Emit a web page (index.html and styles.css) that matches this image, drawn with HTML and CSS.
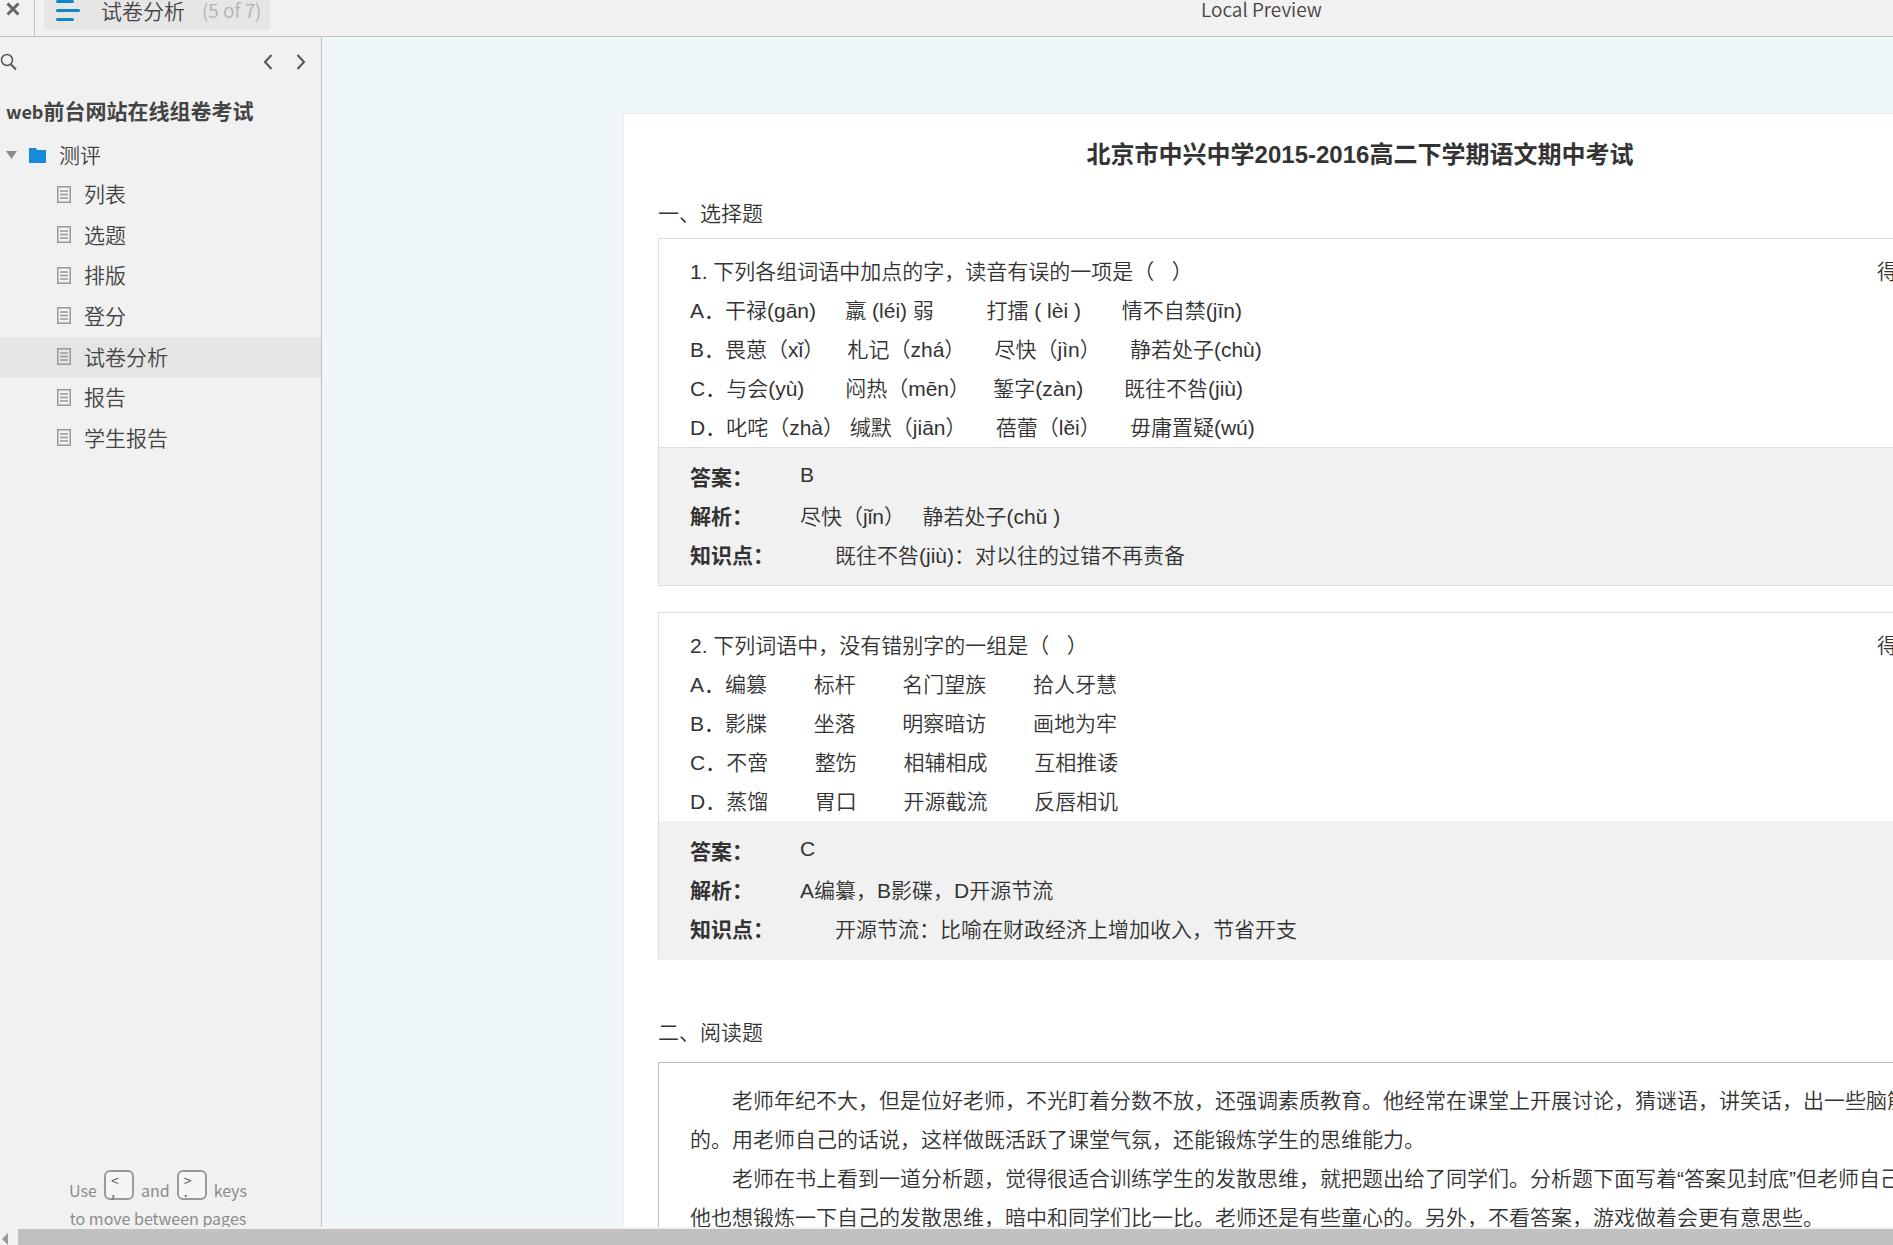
FILE: index.html
```html
<!DOCTYPE html>
<html lang="zh-CN">
<head>
<meta charset="utf-8">
<title>试卷分析</title>
<link rel="stylesheet" href="styles.css">
</head>
<body>
<header class="topbar">
  <button class="close" type="button" aria-label="Close">
    <svg width="14" height="14" viewBox="0 0 14 14"><path d="M1.500 1.500L12.500 12.500M12.500 1.500L1.500 12.500" stroke="#666" stroke-width="3" fill="none"/></svg>
  </button>
  <button class="page-tab" type="button">
    <svg width="24" height="22" viewBox="0 0 24 22"><path d="M1.500 1.500H16.500M1.500 10.500H22.500M1.500 19.500H16.500" stroke="#0f87c0" stroke-width="3" stroke-linecap="round" fill="none"/></svg>
    <span class="tab-name">试卷分析</span>
    <span class="tab-count">(5 of 7)</span>
  </button>
  <span class="project">Local Preview</span>
</header>

<div class="workspace">
  <aside class="sidebar">
    <div class="tools">
      <button class="tool" type="button" aria-label="Search">
        <svg width="17" height="18" viewBox="0 0 17 18"><circle cx="7" cy="7" r="5.500" stroke="#555" stroke-width="1.500" fill="none"/><path d="M11 11.500L16 16.500" stroke="#555" stroke-width="2"/></svg>
      </button>
      <button class="tool prev" type="button" aria-label="Previous">
        <svg width="10" height="16" viewBox="0 0 10 16"><path d="M8.500 1L2 8L8.500 15" stroke="#555" stroke-width="2" fill="none"/></svg>
      </button>
      <button class="tool" type="button" aria-label="Next">
        <svg width="10" height="16" viewBox="0 0 10 16"><path d="M1.500 1L8 8L1.500 15" stroke="#555" stroke-width="2" fill="none"/></svg>
      </button>
    </div>
    <h2 class="project-name"><span class="latin">web</span>前台网站在线组卷考试</h2>
    <div class="folder">
      <svg width="11" height="8" viewBox="0 0 11 8"><path d="M0 0H11L5.500 8Z" fill="#8c8c8c"/></svg>
      <svg width="18" height="16" viewBox="0 0 18 16"><path d="M0 1H7L8 3H17V16H0Z" fill="#168bdc"/></svg>
      <span>测评</span>
    </div>
    <ul class="pages">
      <li><a href="#"><svg class="doc" viewBox="0 0 14 17"><path d="M.750.750H13.250V16.250H.750ZM3 5H11M3 8.500H11M3 12H11" /></svg><span>列表</span></a></li>
      <li><a href="#"><svg class="doc" viewBox="0 0 14 17"><path d="M.750.750H13.250V16.250H.750ZM3 5H11M3 8.500H11M3 12H11" /></svg><span>选题</span></a></li>
      <li><a href="#"><svg class="doc" viewBox="0 0 14 17"><path d="M.750.750H13.250V16.250H.750ZM3 5H11M3 8.500H11M3 12H11" /></svg><span>排版</span></a></li>
      <li><a href="#"><svg class="doc" viewBox="0 0 14 17"><path d="M.750.750H13.250V16.250H.750ZM3 5H11M3 8.500H11M3 12H11" /></svg><span>登分</span></a></li>
      <li class="active"><a href="#"><svg class="doc" viewBox="0 0 14 17"><path d="M.750.750H13.250V16.250H.750ZM3 5H11M3 8.500H11M3 12H11" /></svg><span>试卷分析</span></a></li>
      <li><a href="#"><svg class="doc" viewBox="0 0 14 17"><path d="M.750.750H13.250V16.250H.750ZM3 5H11M3 8.500H11M3 12H11" /></svg><span>报告</span></a></li>
      <li><a href="#"><svg class="doc" viewBox="0 0 14 17"><path d="M.750.750H13.250V16.250H.750ZM3 5H11M3 8.500H11M3 12H11" /></svg><span>学生报告</span></a></li>
    </ul>
    <div class="hint">
      <p class="hint-line">Use <kbd><span>&lt;</span><span>,</span></kbd> and <kbd><span>&gt;</span><span>.</span></kbd> keys</p>
      <p>to move between pages</p>
    </div>
  </aside>

  <main class="canvas">
    <article class="paper">
      <h1>北京市中兴中学2015-2016高二下学期语文期中考试</h1>

      <h2 class="section">一、选择题</h2>
      <section class="question">
        <div class="stem">
          <div class="text">1. 下列各组词语中加点的字，读音有误的一项是（   ）
A．干禄(gān)     羸 (léi) 弱         打擂 ( lèi )       情不自禁(jīn)
B．畏葸（xǐ）    札记（zhá）     尽快（jìn）     静若处子(chù)
C．与会(yù)       闷热（mēn）    錾字(zàn)       既往不咎(jiù)
D．叱咤（zhà） 缄默（jiān）     蓓蕾（lěi）     毋庸置疑(wú)</div>
          <div class="score">得</div>
        </div>
        <dl class="answer">
          <dt>答案：</dt><dd class="key">B</dd>
          <dt>解析：</dt><dd>尽快（jǐn）   静若处子(chǔ )</dd>
          <dt>知识点：</dt><dd class="point">既往不咎(jiù)：对以往的过错不再责备</dd>
        </dl>
      </section>

      <section class="question">
        <div class="stem">
          <div class="text">2. 下列词语中，没有错别字的一组是（   ）
A．编篡        标杆        名门望族        拾人牙慧
B．影牒        坐落        明察暗访        画地为牢
C．不啻        整饬        相辅相成        互相推诿
D．蒸馏        胃口        开源截流        反唇相讥</div>
          <div class="score">得</div>
        </div>
        <dl class="answer plain">
          <dt>答案：</dt><dd class="key">C</dd>
          <dt>解析：</dt><dd>A编纂，B影碟，D开源节流</dd>
          <dt>知识点：</dt><dd class="point">开源节流：比喻在财政经济上增加收入，节省开支</dd>
        </dl>
      </section>

      <h2 class="section reading">二、阅读题</h2>
      <section class="passage">
        <p>老师年纪不大，但是位好老师，不光盯着分数不放，还强调素质教育。他经常在课堂上开展讨论，猜谜语，讲笑话，出一些脑筋<br>的。用老师自己的话说，这样做既活跃了课堂气氛，还能锻炼学生的思维能力。</p>
        <p>老师在书上看到一道分析题，觉得很适合训练学生的发散思维，就把题出给了同学们。分析题下面写着“答案见封底”但老师自己<br>他也想锻炼一下自己的发散思维，暗中和同学们比一比。老师还是有些童心的。另外，不看答案，游戏做着会更有意思些。</p>
      </section>
    </article>
  </main>
</div>

<footer class="scrollbar">
  <button class="scroll-left" type="button" aria-label="Scroll left">
    <svg width="6" height="12" viewBox="0 0 6 12"><path d="M6 0V12L0 6Z" fill="#9a9a9a"/></svg>
  </button>
  <div class="thumb"></div>
</footer>
</body>
</html>
```
FILE: styles.css
```css
* {
  box-sizing: border-box;
  margin: 0;
  padding: 0;
}

body {
  display: grid;
  grid-template-rows: 37px 1fr 18px;
  height: 100vh;
  overflow: hidden;
  background: #f1f1f1;
  color: #444;
  font-family: "Noto Sans CJK SC", sans-serif;
  font-size: 21px;
  font-weight: 350;
}

button {
  border: 0;
  background: none;
  font: inherit;
  color: inherit;
}

svg {
  display: block;
  flex: none;
}

/* Top bar */
.topbar {
  display: flex;
  align-items: flex-start;
  border-bottom: 1px solid #bfc3c5;
  overflow: hidden;
}

.close {
  width: 35px;
  height: 36px;
  padding: 2px 0 0 6px;
  border-right: 1px solid #bfc3c5;
  display: flex;
}

.page-tab {
  display: flex;
  align-items: flex-start;
  width: 226px;
  height: 30px;
  margin-left: 9px;
  padding-left: 12px;
  border-radius: 0 0 4px 4px;
  background: #e6e6e6;
  line-height: 20px;
  white-space: nowrap;
}

.tab-name {
  margin-left: 21px;
}

.tab-count {
  margin-left: 17px;
  color: #b2b2b2;
  font-size: 19px;
}

.project {
  margin-left: 931px;
  font-size: 19px;
  line-height: 18px;
  white-space: nowrap;
}

/* Sidebar */
.workspace {
  display: flex;
  min-height: 0;
  overflow: hidden;
}

.sidebar {
  display: flex;
  flex-direction: column;
  flex: none;
  width: 322px;
  border-right: 1px solid #bfc3c5;
}

.tools {
  display: flex;
  align-items: center;
  gap: 23px;
  height: 49px;
  padding-right: 15px;
}

.prev {
  margin-left: auto;
}

.project-name {
  height: 50px;
  padding-left: 6px;
  font-size: 21px;
  line-height: 48px;
}

.latin {
  font-size: 18px;
}

.folder {
  display: flex;
  align-items: center;
  gap: 12px;
  height: 39px;
  padding: 0 0 2px 6px;
}

.folder span,
.pages span {
  padding-bottom: 2px;
}

.pages {
  display: grid;
  grid-auto-rows: 1fr;
  height: 284px;
  list-style: none;
}

.pages a {
  display: flex;
  align-items: center;
  gap: 13px;
  height: 100%;
  padding: 0 0 2px 57px;
  color: inherit;
  text-decoration: none;
}

.active {
  background: #e5e5e5;
}

.doc {
  width: 14px;
  height: 17px;
  fill: none;
  stroke: #999;
  stroke-width: 1.5;
}

.hint {
  height: 62px;
  margin-top: auto;
  padding-right: 5px;
  overflow: hidden;
  color: #8c8c8c;
  font-size: 16px;
  font-weight: 400;
  line-height: 28px;
  text-align: center;
}

.hint p {
  white-space: nowrap;
}

.hint-line {
  display: flex;
  align-items: flex-end;
  justify-content: center;
  gap: 7px;
  height: 39px;
}

kbd {
  display: flex;
  flex-direction: column;
  width: 30px;
  height: 30px;
  margin-bottom: 4px;
  padding: 3px 5px;
  border: 2px solid #9a9a9a;
  border-radius: 6px;
  background: #f5f5f5;
  color: #555;
  font: 14px/11px "Noto Sans CJK SC", sans-serif;
  text-align: left;
}

/* Exam paper */
.canvas {
  flex: 1;
  min-width: 0;
  padding: 76px 0 0 301px;
  background: #eff7f9;
  overflow: hidden;
}

.paper {
  width: 1474px;
  min-height: 100%;
  padding: 21px 34px 40px;
  border: 1px solid #e8edef;
  background: #fff;
  color: #333;
  font-family: "Liberation Sans", "Noto Sans CJK SC", sans-serif;
  line-height: 39px;
}

h1 {
  margin-bottom: 19px;
  font-size: 24px;
  line-height: 40px;
  text-align: center;
}

.section {
  margin-bottom: 5px;
  font-size: 21px;
  font-weight: 350;
}

.reading {
  margin-top: 53px;
  margin-bottom: 10px;
}

.question {
  border: 1px solid #ddd;
}

.question + .question {
  margin-top: 26px;
}

.stem {
  display: grid;
  grid-template-columns: 1fr 152px;
  padding: 13px 32px 0 31px;
}

.text,
.answer dd {
  white-space: pre;
}

.answer {
  display: grid;
  grid-template-columns: 110px 1fr;
  padding: 10px 31px;
  border-top: 1px solid #ddd;
  background: #f1f1f1;
}

.answer dt {
  font-weight: 700;
  white-space: nowrap;
}

.answer .key {
  line-height: 34px;
}

.answer .point {
  padding-left: 35px;
}

.question:has(.plain) {
  border-bottom-color: #f1f1f1;
}

.plain {
  border-top-color: #f1f1f1;
}

.passage {
  padding: 18px 31px;
  border: 1px solid #bbb;
}

.passage p {
  text-indent: 42px;
  white-space: nowrap;
}

/* Horizontal scrollbar */
.scrollbar {
  display: flex;
  padding-top: 2px;
  background: #f1f1f1;
}

.scroll-left {
  width: 18px;
  padding: 4px 0 0 2px;
}

.thumb {
  flex: 1;
  background: #c1c1c1;
}
```
